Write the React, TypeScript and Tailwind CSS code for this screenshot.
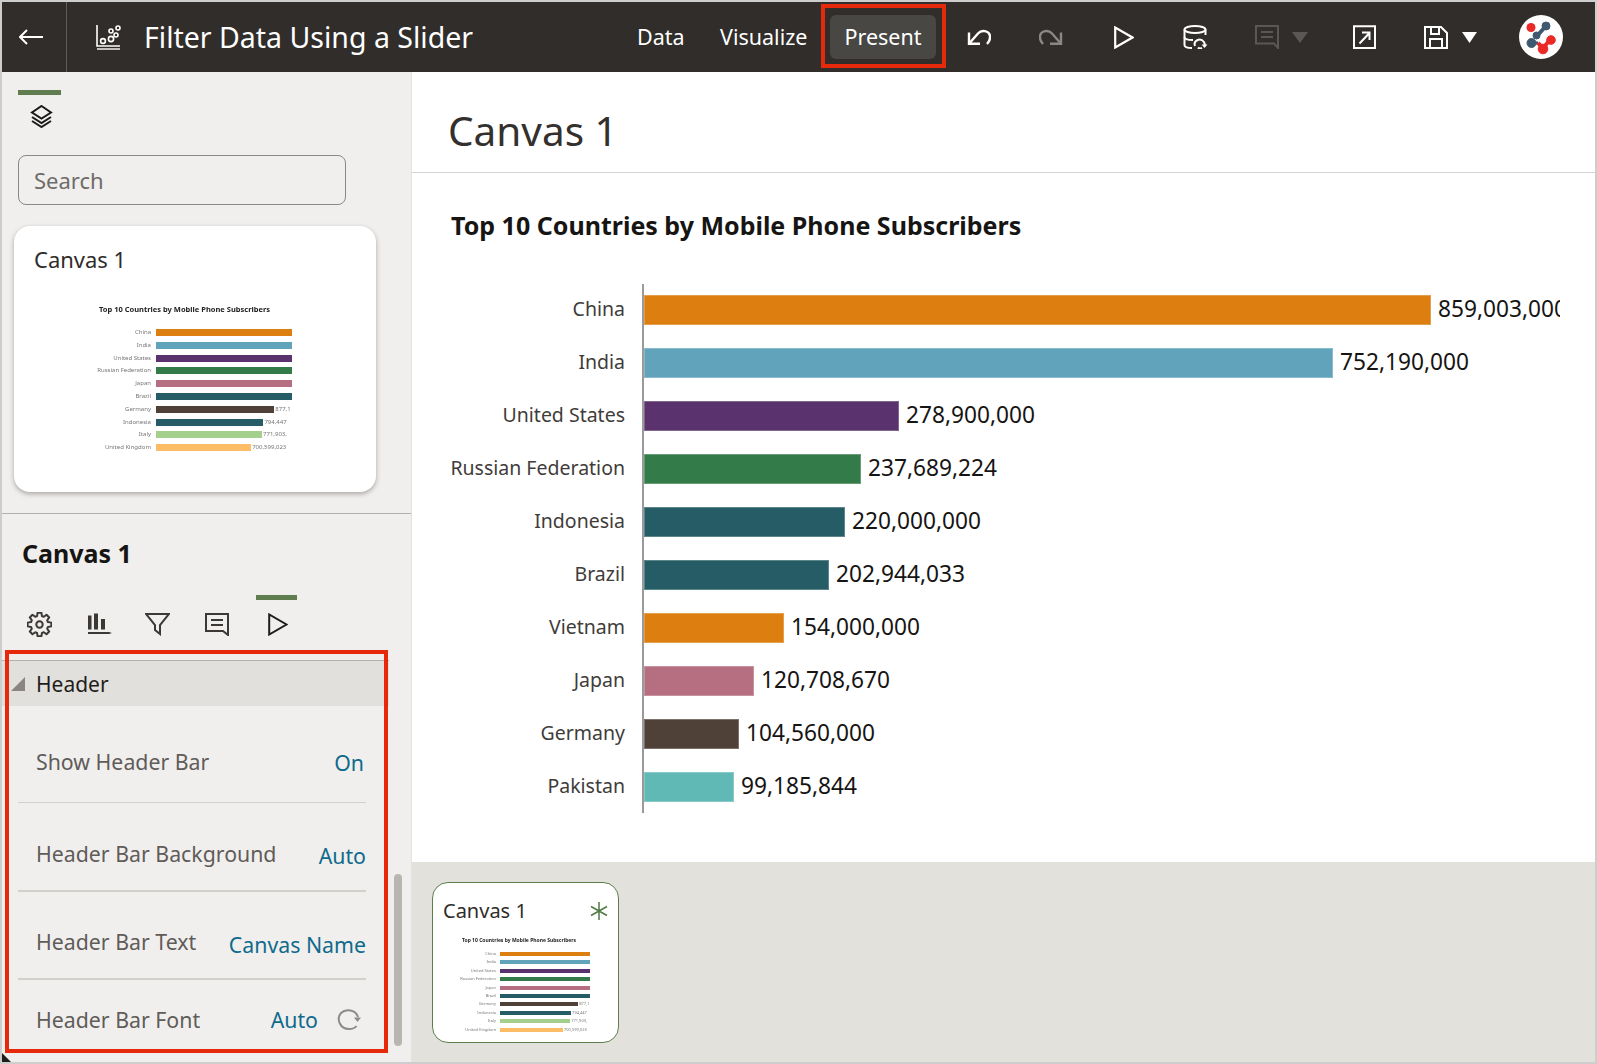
import React from "react";

const bars = [
  { name: "China", value: "859,003,000", w: 787, color: "#dd7e10" },
  { name: "India", value: "752,190,000", w: 689, color: "#62a3bc" },
  { name: "United States", value: "278,900,000", w: 255, color: "#5a326e" },
  { name: "Russian Federation", value: "237,689,224", w: 217, color: "#337b49" },
  { name: "Indonesia", value: "220,000,000", w: 201, color: "#265c66" },
  { name: "Brazil", value: "202,944,033", w: 185, color: "#265c66" },
  { name: "Vietnam", value: "154,000,000", w: 140, color: "#dd7e10" },
  { name: "Japan", value: "120,708,670", w: 110, color: "#b56f80" },
  { name: "Germany", value: "104,560,000", w: 95, color: "#4f4038" },
  { name: "Pakistan", value: "99,185,844", w: 90, color: "#61b9b6" },
];

const thumbBars = [
  { name: "China", value: "", pct: 100, color: "#dd7e10" },
  { name: "India", value: "", pct: 100, color: "#62a3bc" },
  { name: "United States", value: "", pct: 100, color: "#5a326e" },
  { name: "Russian Federation", value: "", pct: 100, color: "#337b49" },
  { name: "Japan", value: "", pct: 100, color: "#b56f80" },
  { name: "Brazil", value: "", pct: 100, color: "#265c66" },
  { name: "Germany", value: "877,1", pct: 87, color: "#4f4038" },
  { name: "Indonesia", value: "794,447", pct: 79, color: "#265c66" },
  { name: "Italy", value: "771,903,", pct: 78, color: "#a5cf8d" },
  { name: "United Kingdom", value: "700,599,023", pct: 70, color: "#fdbc66" },
];

const gearPath = (() => {
  const cx = 12.5, cy = 12.5, n = 8, ro = 12, ri = 8.8;
  const pts: string[] = [];
  for (let i = 0; i < n; i++) {
    const a = (i * 2 * Math.PI) / n;
    const s = (2 * Math.PI) / n;
    const p = (r: number, t: number) => `${(cx + r * Math.cos(t)).toFixed(2)} ${(cy + r * Math.sin(t)).toFixed(2)}`;
    pts.push(p(ri, a - s * 0.36), p(ro, a - s * 0.2), p(ro, a + s * 0.2), p(ri, a + s * 0.36));
  }
  return `M${pts.join("L")}Z`;
})();

const UndoIcon = ({ className }: { className?: string }) => (
  <svg width="24" height="16" viewBox="0 0 24 16" fill="none" stroke="currentColor" strokeWidth="2.4" className={className}>
    <path d="M2 3.5V14.8H13" />
    <path d="M2 14.8L11 4.5C14.5 0.5 22 1.5 23 7C23.3 10 22 13 20 15" />
  </svg>
);

const Thumb = ({
  titleCls, labelCls, labelW, barCol, rowCls, colCls, valCls,
}: {
  titleCls: string; labelCls: string; labelW: string; barCol: string; rowCls: string; colCls: string; valCls: string;
}) => (
  <div className="blur-[0.7px]">
    <div className={titleCls}>Top 10 Countries by Mobile Phone Subscribers</div>
    <div className="flex">
      <div className={`${labelW} ${colCls} flex flex-col text-right`}>
        {thumbBars.map((b) => (
          <div key={b.name} className={`${rowCls} ${labelCls} flex items-center justify-end whitespace-nowrap`}>{b.name}</div>
        ))}
      </div>
      <div className={`${barCol} ${colCls} flex flex-col`}>
        {thumbBars.map((b) => (
          <div key={b.name} className={`${rowCls} flex items-center`}>
            <div className="h-full shrink-0" style={{ width: `${b.pct}%`, background: b.color }} />
            <span className={`${valCls} whitespace-nowrap overflow-hidden`}>{b.value}</span>
          </div>
        ))}
      </div>
    </div>
  </div>
);

const Avatar = () => (
  <svg width="44" height="44" viewBox="0 0 44 44" className="ml-[42px] shrink-0">
    <circle cx="22" cy="22" r="22" fill="#fff" />
    <circle cx="12" cy="12.5" r="4.5" fill="#ea2a26" />
    <g fill="#3f5a70" stroke="#3f5a70">
      <circle cx="27" cy="11" r="4" />
      <path d="M26 12L18 21" strokeWidth="4" fill="none" />
      <circle cx="17.5" cy="20.5" r="3.5" />
      <circle cx="12.5" cy="28" r="4.5" />
      <path d="M13 28H19" strokeWidth="3" fill="none" />
    </g>
    <g fill="#ea2a26" stroke="#ea2a26">
      <circle cx="32" cy="25" r="4.3" />
      <circle cx="24" cy="34" r="4.8" />
      <path d="M31 25L24 33M19 28L24 33" strokeWidth="4" fill="none" />
    </g>
  </svg>
);

export default function App() {
  return (
    <div className="relative w-[1597px] h-[1064px] overflow-hidden bg-white border-2 border-[#cdcdcd] flex flex-col font-['Noto_Sans',sans-serif]">
      {/* top bar */}
      <header className="h-[70px] shrink-0 bg-[#312d2a] flex items-center text-white">
        <svg width="24" height="16" viewBox="0 0 24 16" fill="none" stroke="#fff" strokeWidth="2" className="ml-[17px] shrink-0">
          <path d="M1 8H24M8 1L1 8L8 15" />
        </svg>
        <div className="ml-[23px] w-px h-full bg-[#5f5c59] shrink-0" />
        <svg width="25" height="25" viewBox="0 0 25 25" fill="none" stroke="#fff" strokeWidth="1.6" className="ml-[29px] shrink-0">
          <path d="M1 0V21H24" />
          <path d="M1 24H24" strokeWidth="1.4" />
          <circle cx="7" cy="16" r="2.4" />
          <circle cx="15" cy="14" r="2.6" />
          <circle cx="15" cy="6" r="2" />
          <circle cx="22" cy="3" r="2" />
          <circle cx="20" cy="10" r="2" />
        </svg>
        <div className="ml-[23px] w-[493px] text-[28.5px] leading-none whitespace-nowrap">Filter Data Using a Slider</div>
        <div className="w-[83px] text-[21.5px]">Data</div>
        <div className="w-[110px] text-[21.5px]">Visualize</div>
        <div className="w-[106px] h-[44px] rounded-md bg-[#494744] text-[21.5px] flex items-center justify-center"><span className="mt-[1px]">Present</span></div>
        <UndoIcon className="ml-[31px] shrink-0" />
        <UndoIcon className="ml-[48px] shrink-0 -scale-x-100 text-[#8a8886]" />
        <svg width="20" height="23" viewBox="0 0 20 23" fill="none" stroke="#fff" strokeWidth="2.2" className="ml-[51px] shrink-0">
          <path d="M1.2 1.5V21.5L18.5 11.5Z" />
        </svg>
        <svg width="25" height="24" viewBox="0 0 25 24" fill="none" stroke="#fff" strokeWidth="2" className="ml-[49px] shrink-0">
          <ellipse cx="12" cy="4.5" rx="10.5" ry="3.5" />
          <path d="M1.5 4.5V20C1.5 22 5 23 9 23" />
          <path d="M22.5 4.5V10" />
          <path d="M1.5 12C1.5 14 6 15 10 15" />
          <path d="M12 21C10 16 17 12 21 17L22 20" />
          <path d="M18.5 19.5H24.5L21.5 23Z" fill="#fff" stroke="none" />
          <path d="M15 22.5C16 23.5 18 23.5 19 23" />
        </svg>
        <svg width="24" height="24" viewBox="0 0 24 24" fill="none" stroke="#5a5855" strokeWidth="2" className="ml-[47px] shrink-0">
          <path d="M1 1H23V23L19 18.5H1Z" />
          <path d="M6 7H18M6 12H18" />
        </svg>
        <svg width="16" height="11" viewBox="0 0 16 11" className="ml-[13px] shrink-0"><path d="M0 0H16L8 11Z" fill="#5a5855" /></svg>
        <svg width="23" height="24" viewBox="0 0 23 24" fill="none" stroke="#fff" strokeWidth="2" className="ml-[45px] shrink-0">
          <path d="M1 1.2H22V23H1Z" />
          <path d="M6.5 18.5L16 8.5M9 7.5H16.5V15" />
        </svg>
        <svg width="24" height="23" viewBox="0 0 24 23" fill="none" stroke="#fff" strokeWidth="2" className="ml-[48px] shrink-0">
          <path d="M1 1H17L23 7V22H1Z" />
          <path d="M7 1V8H15V1" />
          <path d="M6 22V13H18V22" />
        </svg>
        <svg width="15" height="11" viewBox="0 0 15 11" className="ml-[14px] shrink-0"><path d="M0 0H15L7.5 11Z" fill="#fff" /></svg>
        <Avatar />
      </header>

      <div className="flex-1 flex min-h-0">
        {/* sidebar */}
        <aside className="w-[410px] shrink-0 bg-[#f1efed] flex flex-col border-r border-[#e4e2df]">
          <div className="ml-[16px] mt-[18px] w-[43px] h-[5px] bg-[#5f7d4f]" />
          <svg width="23" height="23" viewBox="0 0 23 23" fill="none" stroke="#1c1a18" strokeWidth="2" className="ml-[28px] mt-[10px]">
            <path d="M11.5 1L21 7.5L11.5 13.5L2 7.5Z" />
            <path d="M2 12L11.5 18L21 12M2 16L11.5 22L21 16" />
          </svg>
          <div className="ml-[16px] mt-[27px] w-[328px] h-[50px] rounded-lg border border-[#8b8784] flex items-center pl-[15px] text-[22px] text-[#6f6b68]">Search</div>
          <div className="ml-[12px] mt-[21px] w-[362px] h-[266px] shrink-0 rounded-2xl bg-white shadow-[0_2px_5px_rgba(0,0,0,0.3)] flex flex-col">
            <div className="pl-[20px] pt-[18px] h-[75px] text-[22px] leading-[30px] text-[#2f2c2a]">Canvas 1</div>
            <Thumb
              titleCls="ml-[85px] h-[27px] leading-[16px] text-[7.5px] font-bold text-[#222] whitespace-nowrap"
              labelCls="text-[6px] text-[#777]"
              labelW="w-[137px]"
              barCol="ml-[5px] w-[136px] overflow-hidden"
              rowCls="h-[7px] shrink-0"
              colCls="gap-[5.8px] pt-[1px]"
              valCls="text-[6px] text-[#777] ml-[1px]"
            />
          </div>
          <div className="mt-[21px] border-t border-[#b4b1ad]" />
          <div className="ml-[20px] mt-[19px] h-[40px] leading-[40px] text-[25px] font-bold text-[#161513]">Canvas 1</div>
          <div className="ml-[254px] mt-[22px] w-[41px] h-[5px] bg-[#5f7d4f]" />
          <div className="mt-[12px] h-[24px] flex items-center text-[#3b3835]">
            <svg width="25" height="25" viewBox="0 0 25 25" fill="none" stroke="#3b3835" strokeWidth="2" className="ml-[25px] shrink-0">
              <path d={gearPath} strokeLinejoin="round" />
              <circle cx="12.5" cy="12.5" r="3.2" />
            </svg>
            <svg width="24" height="22" viewBox="0 0 24 22" className="ml-[36px] shrink-0" fill="#3b3835">
              <rect x="0" y="2.5" width="3.5" height="14" />
              <rect x="6" y="0.5" width="4" height="16" />
              <rect x="13" y="6" width="4" height="10.5" />
              <path d="M0 19H21L24 20L21 21H0Z" />
            </svg>
            <svg width="25" height="23" viewBox="0 0 25 23" fill="none" stroke="#3b3835" strokeWidth="2" className="ml-[33px] shrink-0">
              <path d="M1 1H24L15 12V21L10 17V12Z" />
            </svg>
            <svg width="24" height="23" viewBox="0 0 24 23" fill="none" stroke="#3b3835" strokeWidth="2" className="ml-[35px] shrink-0">
              <path d="M1 1H23V22L18 18H1Z" />
              <path d="M6 7H18M6 12H18" />
            </svg>
            <svg width="20" height="23" viewBox="0 0 20 23" fill="none" stroke="#1f1d1b" strokeWidth="2" className="ml-[39px] shrink-0">
              <path d="M1.2 1.5V21.5L18.5 11.5Z" />
            </svg>
          </div>

          <div className="mt-[24px] flex-1 relative">
            <div className="w-[387px] h-[46px] border-t border-[#b4b1ad] bg-[#e2e0dc] flex items-center">
              <svg width="14" height="14" viewBox="0 0 14 14" className="ml-[9px] shrink-0"><path d="M14 0V14H0Z" fill="#8a8582" /></svg>
              <span className="ml-[11px] mt-[2px] text-[21px] text-[#1f1d1b]">Header</span>
            </div>
            <div className="w-[348px] ml-[16px] flex flex-col text-[21.3px]">
              <div className="h-[97px] pt-[15px] flex items-center justify-between border-b border-[#d3d0cb]">
                <span className="ml-[18px] text-[#5f5c59]">Show Header Bar</span>
                <span className="text-[#0f6a8c] mt-[2px] mr-[2px]">On</span>
              </div>
              <div className="h-[89px] pt-[15px] flex items-center justify-between border-b-2 border-[#d3d0cb]">
                <span className="ml-[18px] text-[#5f5c59]">Header Bar Background</span>
                <span className="text-[#0f6a8c] mt-[4px]">Auto</span>
              </div>
              <div className="h-[88px] pt-[14px] flex items-center justify-between border-b-2 border-[#d3d0cb]">
                <span className="ml-[18px] text-[#5f5c59]">Header Bar Text</span>
                <span className="text-[#0f6a8c] mt-[5px]">Canvas Name</span>
              </div>
              <div className="h-[80px] flex items-center justify-between">
                <span className="ml-[18px] text-[#5f5c59]">Header Bar Font</span>
                <span className="flex items-center">
                  <span className="text-[#0f6a8c]">Auto</span>
                  <svg width="24" height="22" viewBox="0 0 24 22" fill="none" stroke="#8d8a87" strokeWidth="2" className="ml-[19px] mr-[5px] -mt-[2px]">
                    <path d="M21 9C19 2 9 0 4 5C-1 11 3 21 12 21C15 21 18 20 19.5 18" />
                    <path d="M17 9.5H24L20.5 14Z" fill="#8d8a87" stroke="none" />
                  </svg>
                </span>
              </div>
            </div>
            {/* scrollbar thumb */}
            <div className="absolute left-[392px] top-[214px] w-[8px] h-[172px] rounded-full bg-[#b9b5b0]" />
          </div>
        </aside>

        {/* main */}
        <main className="flex-1 min-w-0 flex flex-col">
          <div className="h-[101px] shrink-0 border-b border-[#d4d4d4] pl-[36px] pt-[30px] text-[40.5px] leading-[58px] text-[#33302e]">Canvas 1</div>
          <div className="flex-1 min-h-0 pl-[38px] pt-[30px]">
            <div className="ml-[1px] h-[44px] leading-[44px] text-[25px] font-bold text-[#161513] whitespace-nowrap">Top 10 Countries by Mobile Phone Subscribers</div>
            <div className="mt-[37px] flex">
              <div className="w-[175px] shrink-0 flex flex-col gap-[23px] py-[11px] text-right text-[19.5px] text-[#3f3c3a]">
                {bars.map((b) => (
                  <div key={b.name} className="h-[30px] leading-[28px] whitespace-nowrap flex justify-end">{b.name}</div>
                ))}
              </div>
              <div className="ml-[17px] w-[918px] overflow-hidden border-l-2 border-[#9a9a9a] flex flex-col gap-[23px] py-[11px]">
                {bars.map((b) => (
                  <div key={b.name} className="h-[30px] flex items-center">
                    <div className="h-full shrink-0 border border-white/25" style={{ width: b.w, background: b.color }} />
                    <span className="ml-[7px] mb-[2px] text-[22.7px] leading-[28px] text-[#161513] whitespace-nowrap">{b.value}</span>
                  </div>
                ))}
              </div>
            </div>
          </div>
          <div className="h-[200px] shrink-0 bg-[#e2e1dc] pl-[20px] pt-[20px]">
            <div className="w-[187px] h-[161px] rounded-2xl bg-white border border-[#5d7e4a] flex flex-col">
              <div className="h-[47px] pl-[10px] pt-[14px] pr-[10px] flex justify-between text-[20px] leading-[28px] text-[#2f2c2a]">
                <span>Canvas 1</span>
                <svg width="18" height="18" viewBox="0 0 18 18" fill="none" stroke="#4f7a42" strokeWidth="1.5" className="mt-[5px] shrink-0">
                  <path d="M9 0V18M1 4.5L17 13.5M1 13.5L17 4.5" />
                </svg>
              </div>
              <Thumb
                titleCls="ml-[29px] h-[21px] leading-[21px] text-[5px] font-bold text-[#222] whitespace-nowrap"
                labelCls="text-[4px] text-[#777]"
                labelW="w-[63px]"
                barCol="ml-[4px] w-[90px] overflow-hidden"
                rowCls="h-[4px] shrink-0"
                colCls="gap-[4.4px] pt-[1px]"
                valCls="text-[4px] text-[#777] ml-[1px]"
              />
            </div>
          </div>
        </main>
      </div>

      {/* annotation boxes */}
      <div className="absolute left-[819px] top-[2px] w-[125px] h-[64px] border-[4px] border-[#e6290b]" />
      <div className="absolute left-[3px] top-[648px] w-[383px] h-[403px] border-[4px] border-[#e6290b]" />
      <svg width="9" height="9" viewBox="0 0 9 9" className="absolute left-0 bottom-0"><path d="M0 0L9 9H0Z" fill="#1f1d1b" /></svg>
    </div>
  );
}
